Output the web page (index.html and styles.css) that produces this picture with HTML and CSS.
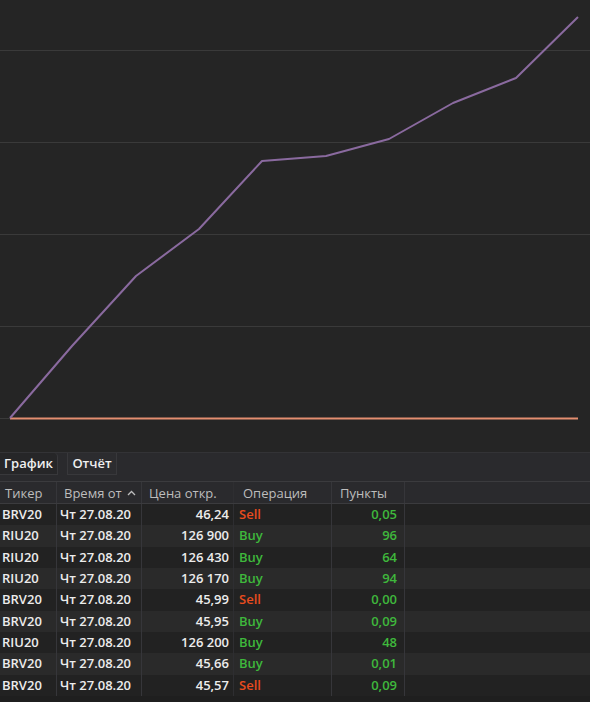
FILE: index.html
```html
<!DOCTYPE html>
<html lang="ru">
<head>
<meta charset="utf-8">
<link rel="stylesheet" href="styles.css">
</head>
<body>
<div class="chart">
  <svg width="590" height="452" viewBox="0 0 590 452">
    <rect x="0" y="0" width="590" height="452" fill="#252525"/>
    <g stroke="#3a3a3a" stroke-width="1">
      <line x1="0" y1="50.5" x2="590" y2="50.5"/>
      <line x1="0" y1="142.5" x2="590" y2="142.5"/>
      <line x1="0" y1="234.5" x2="590" y2="234.5"/>
      <line x1="0" y1="326.5" x2="590" y2="326.5"/>
      <line x1="0" y1="418.5" x2="10" y2="418.5"/>
    </g>
    <line x1="10" y1="418.5" x2="578" y2="418.5" stroke="#e38e70" stroke-width="2"/>
    <polyline fill="none" stroke="#8a6a9f" stroke-width="2" stroke-linejoin="round"
      points="10,418 72,346 136,276 199,229 262,161 326,156 389,139 453,103 516,78 578,17"/>
  </svg>
</div>
<div class="tabs">
  <div class="tab active">График</div>
  <div class="tab">Отчёт</div>
</div>
<div class="table">
  <div class="row head">
    <div class="c c1">Тикер</div>
    <div class="c c2"><span>Время от</span><svg class="sort" width="9" height="6" viewBox="0 0 9 6"><path d="M1 5 L4.5 1.5 L8 5" fill="none" stroke="#bdbdbd" stroke-width="1.3"/></svg></div>
    <div class="c c3">Цена откр.</div>
    <div class="c c4">Операция</div>
    <div class="c c5">Пункты</div>
    <div class="c c6"></div>
  </div>
  <div class="row"><div class="c c1">BRV20</div><div class="c c2">Чт 27.08.20</div><div class="c c3 r">46,24</div><div class="c c4 sell">Sell</div><div class="c c5 r g">0,05</div><div class="c c6"></div></div>
  <div class="row"><div class="c c1">RIU20</div><div class="c c2">Чт 27.08.20</div><div class="c c3 r">126 900</div><div class="c c4 buy">Buy</div><div class="c c5 r g">96</div><div class="c c6"></div></div>
  <div class="row"><div class="c c1">RIU20</div><div class="c c2">Чт 27.08.20</div><div class="c c3 r">126 430</div><div class="c c4 buy">Buy</div><div class="c c5 r g">64</div><div class="c c6"></div></div>
  <div class="row"><div class="c c1">RIU20</div><div class="c c2">Чт 27.08.20</div><div class="c c3 r">126 170</div><div class="c c4 buy">Buy</div><div class="c c5 r g">94</div><div class="c c6"></div></div>
  <div class="row"><div class="c c1">BRV20</div><div class="c c2">Чт 27.08.20</div><div class="c c3 r">45,99</div><div class="c c4 sell">Sell</div><div class="c c5 r g">0,00</div><div class="c c6"></div></div>
  <div class="row"><div class="c c1">BRV20</div><div class="c c2">Чт 27.08.20</div><div class="c c3 r">45,95</div><div class="c c4 buy">Buy</div><div class="c c5 r g">0,09</div><div class="c c6"></div></div>
  <div class="row"><div class="c c1">RIU20</div><div class="c c2">Чт 27.08.20</div><div class="c c3 r">126 200</div><div class="c c4 buy">Buy</div><div class="c c5 r g">48</div><div class="c c6"></div></div>
  <div class="row"><div class="c c1">BRV20</div><div class="c c2">Чт 27.08.20</div><div class="c c3 r">45,66</div><div class="c c4 buy">Buy</div><div class="c c5 r g">0,01</div><div class="c c6"></div></div>
  <div class="row"><div class="c c1">BRV20</div><div class="c c2">Чт 27.08.20</div><div class="c c3 r">45,57</div><div class="c c4 sell">Sell</div><div class="c c5 r g">0,09</div><div class="c c6"></div></div>
</div>
</body>
</html>
```

FILE: styles.css
```css
html, body {
  margin: 0;
  padding: 0;
  background: #1f1f1f;
  width: 590px;
  height: 702px;
  overflow: hidden;
  font-family: "Open Sans", "Noto Sans", sans-serif;
  font-size: 13px;
}
.chart {
  height: 452px;
}
.chart svg {
  display: block;
}
.tabs {
  height: 29px;
  background: #2a2a2d;
  border-top: 1px solid #333336;
  box-sizing: border-box;
  display: flex;
  align-items: flex-start;
  gap: 9px;
}
.tab {
  height: 22px;
  line-height: 21px;
  width: 50px;
  text-align: center;
  color: #f0f0f0;
  font-weight: 600;
  border: 1px solid #38383b;
  border-top: none;
  box-sizing: border-box;
  background: #2c2c2f;
}
.tab.active {
  background: #262628;
  width: 58px;
  border-left: none;
  border-radius: 0 4px 0 0;
}
.table {
  display: flex;
  flex-direction: column;
}
.row {
  display: grid;
  grid-template-columns: 57px 85px 92px 98px 73px 1fr;
  height: 21.33px;
  line-height: 21px;
  color: #ececec;
  font-weight: 600;
}
.row:nth-child(even) { background: #222222; }
.row:nth-child(odd) { background: #2a2a2a; }
.row.head {
  height: 23px;
  line-height: 22px;
  background: #2a2a2d;
  color: #bdbdbd;
  font-weight: 400;
  border-top: 1px solid #3b3b3e;
  border-bottom: 1px solid #3b3b3e;
  box-sizing: border-box;
}
.c {
  border-right: 1px solid #36363a;
  white-space: nowrap;
  overflow: hidden;
  padding-left: 3px;
  box-sizing: border-box;
}
.row .c3 { border-right-color: #2e2e31; }
.c6 { border-right: none; }
.head .c1 { padding-left: 5px; }
.head .c2 { padding-left: 7px; display: flex; align-items: center; }
.head .c3 { padding-left: 7px; }
.head .c4 { padding-left: 9px; }
.head .c5 { padding-left: 8px; }
.c1 { padding-left: 2px; }
.c4 { padding-left: 5px; }
.sort { margin-left: 5px; }
.r { text-align: right; padding-right: 4px; }
.c5.r { padding-right: 7px; }
.sell { color: #e84c1e; }
.buy { color: #3fb83c; }
.g { color: #3fb83c; }
```
